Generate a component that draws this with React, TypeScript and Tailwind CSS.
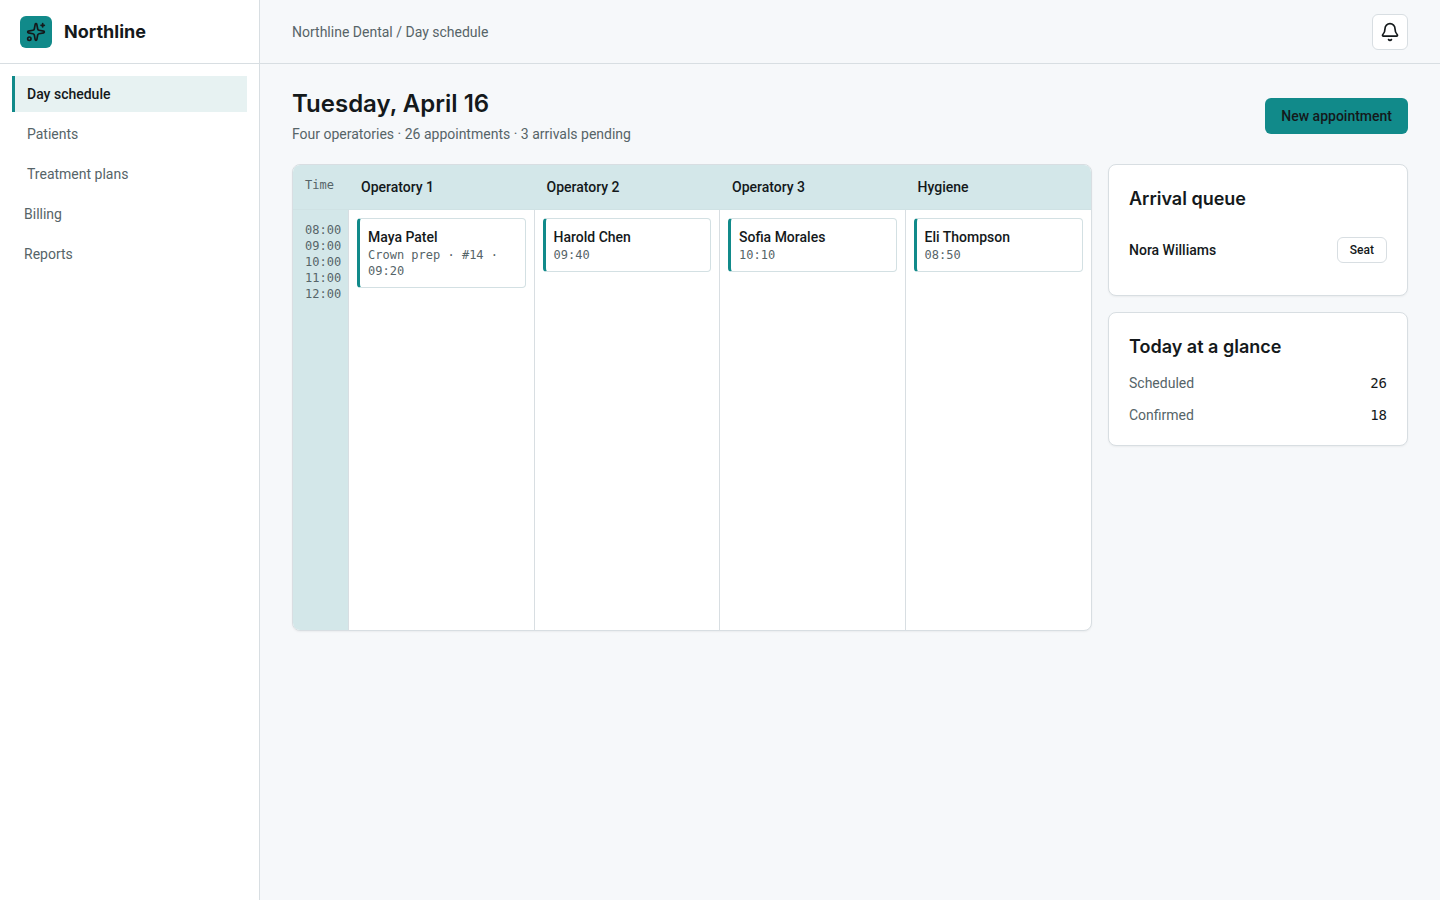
import { Bell, Sparkles } from "lucide-react";

interface NavItem {
  label: string;
  marker: boolean;
  active?: boolean;
}

interface Operatory {
  name: string;
  patient: string;
  detail: string;
}

const navItems: NavItem[] = [
  { label: "Day schedule", marker: true, active: true },
  { label: "Patients", marker: true },
  { label: "Treatment plans", marker: true },
  { label: "Billing", marker: false },
  { label: "Reports", marker: false },
];

const hours = ["08:00", "09:00", "10:00", "11:00", "12:00"];

const operatories: Operatory[] = [
  {
    name: "Operatory 1",
    patient: "Maya Patel",
    detail: "Crown prep · #14 · 09:20",
  },
  { name: "Operatory 2", patient: "Harold Chen", detail: "09:40" },
  { name: "Operatory 3", patient: "Sofia Morales", detail: "10:10" },
  { name: "Hygiene", patient: "Eli Thompson", detail: "08:50" },
];

const stats = [
  { label: "Scheduled", value: 26 },
  { label: "Confirmed", value: 18 },
];

const Sidebar = () => {
  return (
    <aside className="w-[260px] shrink-0 bg-white border-r border-[#d8dee2]">
      <div className="h-16 flex items-center gap-3 px-5 border-b border-[#d8dee2]">
        <div className="w-8 h-8 flex items-center justify-center rounded-md bg-[#118a8a]">
          <Sparkles size={20} />
        </div>
        <span className="font-['Inter',sans-serif] text-lg font-bold">
          Northline
        </span>
      </div>
      <nav className="flex flex-col gap-1 p-3">
        {navItems.map((item) => (
          <a
            key={item.label}
            href="#"
            aria-current={item.active ? "page" : undefined}
            className={`h-9 flex items-center px-3 ${
              item.marker ? "border-l-3" : ""
            } ${
              item.active
                ? "border-[#118a8a] bg-[#e7f2f2] font-medium"
                : "border-transparent text-[#566468]"
            }`}
          >
            {item.label}
          </a>
        ))}
      </nav>
    </aside>
  );
};

const Schedule = () => {
  return (
    <div className="flex-1 min-w-0 overflow-hidden rounded-lg border border-[#d8dee2] bg-white shadow-xs">
      <table className="w-full table-fixed border-separate border-spacing-0 text-left">
        <thead>
          <tr className="bg-[#d3e7e9] align-top">
            <th className="w-14 px-3 pt-3 border-b border-[#cfe2e4] font-['DejaVu_Sans_Mono',monospace] text-xs font-normal text-[#566468]">
              Time
            </th>
            {operatories.map((op) => (
              <th
                key={op.name}
                className="h-[45px] p-3 pb-0 border-b border-[#cfe2e4] font-medium"
              >
                {op.name}
              </th>
            ))}
          </tr>
        </thead>
        <tbody>
          <tr className="h-[420px] align-top">
            <td className="bg-[#d3e7e9] py-3 pl-3 border-r border-[#d8dee2] font-['DejaVu_Sans_Mono',monospace] text-xs text-[#566468]">
              {hours.map((hour) => (
                <div key={hour}>{hour}</div>
              ))}
            </td>
            {operatories.map((op) => (
              <td
                key={op.name}
                className="p-2 border-r border-[#d8dee2] last:border-r-0"
              >
                <div className="p-2 rounded-sm border border-l-3 border-[#d3e0e3] border-l-[#118a8a]">
                  <p className="font-medium">{op.patient}</p>
                  <p className="font-['DejaVu_Sans_Mono',monospace] text-xs text-[#566468]">
                    {op.detail}
                  </p>
                </div>
              </td>
            ))}
          </tr>
        </tbody>
      </table>
    </div>
  );
};

const ArrivalQueue = () => {
  return (
    <section className="p-5 rounded-lg border border-[#d8dee2] bg-white shadow-xs">
      <h2 className="font-['Inter',sans-serif] text-lg leading-7 font-semibold">
        Arrival queue
      </h2>
      <div className="mt-3 py-3 flex items-center justify-between">
        <span className="font-medium">Nora Williams</span>
        <button className="px-3 py-1 rounded-md border border-[#d8dee2] bg-white text-xs font-medium">
          Seat
        </button>
      </div>
    </section>
  );
};

const Glance = () => {
  return (
    <section className="p-5 rounded-lg border border-[#d8dee2] bg-white shadow-xs">
      <h2 className="font-['Inter',sans-serif] text-lg leading-7 font-semibold">
        Today at a glance
      </h2>
      <dl className="mt-3 flex flex-col gap-3">
        {stats.map((stat) => (
          <div key={stat.label} className="flex justify-between">
            <dt className="text-[#566468]">{stat.label}</dt>
            <dd className="font-['DejaVu_Sans_Mono',monospace]">
              {stat.value}
            </dd>
          </div>
        ))}
      </dl>
    </section>
  );
};

export default function App() {
  return (
    <div className="min-h-screen flex bg-[#f6f8fa] font-['Roboto',sans-serif] text-sm text-[#14191b]">
      <Sidebar />
      <div className="flex-1 min-w-0">
        <header className="h-16 px-8 flex items-center justify-between border-b border-[#d8dee2]">
          <span className="text-[#566468]">Northline Dental / Day schedule</span>
          <button
            aria-label="Notifications"
            className="w-9 h-9 flex items-center justify-center rounded-md border border-[#d8dee2] bg-white"
          >
            <Bell size={20} />
          </button>
        </header>
        <main className="px-8 py-6">
          <div className="mb-5 flex items-center justify-between">
            <div>
              <h1 className="font-['Inter',sans-serif] text-2xl font-semibold">
                Tuesday, April 16
              </h1>
              <p className="mt-1 text-[#566468]">
                Four operatories · 26 appointments · 3 arrivals pending
              </p>
            </div>
            <button className="h-9 px-4 rounded-md bg-[#118a8a] font-medium">
              New appointment
            </button>
          </div>
          <div className="flex items-start gap-4">
            <Schedule />
            <div className="w-[300px] shrink-0 flex flex-col gap-4">
              <ArrivalQueue />
              <Glance />
            </div>
          </div>
        </main>
      </div>
    </div>
  );
}
